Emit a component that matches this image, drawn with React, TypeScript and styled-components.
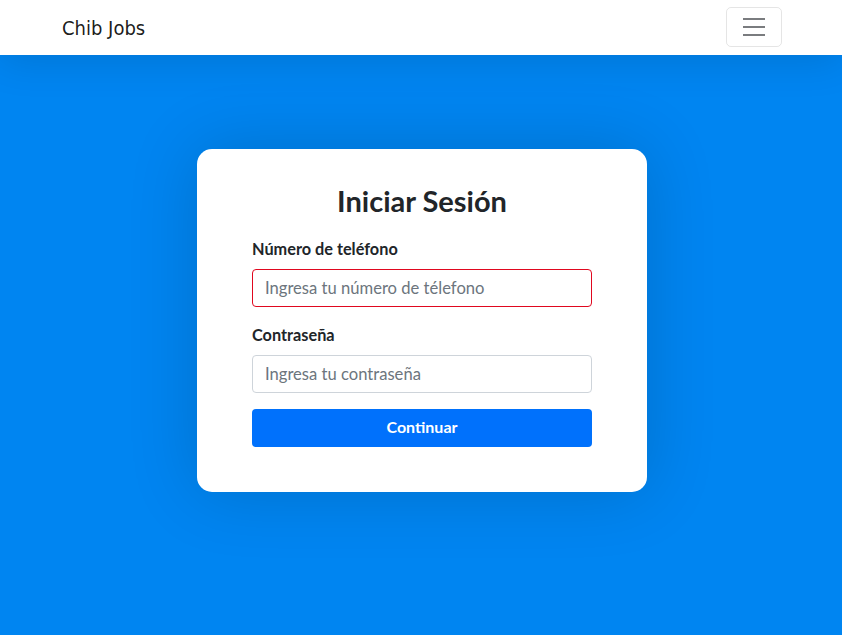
import React from "react";
import styled, { createGlobalStyle } from "styled-components";

const GlobalStyle = createGlobalStyle`
  html, body { margin: 0; padding: 0; }
  body {
    background: #0085f1;
    min-height: 100vh;
    font-family: "Lato", "Liberation Sans", sans-serif;
    color: #212529;
  }
  * { box-sizing: border-box; }
`;

const Page = styled.div`
  min-height: 100vh;
  display: flex;
  flex-direction: column;
  padding-left: 2px;
`;

const Navbar = styled.nav`
  background: #fff;
  height: 55px;
  margin-left: -2px;
  padding-left: 2px;
  display: flex;
  justify-content: center;
  position: relative;
  z-index: 1;
  box-shadow: 0 6px 40px rgba(0, 0, 0, 0.12);
`;

const NavInner = styled.div`
  width: 720px;
  display: flex;
  align-items: center;
  justify-content: space-between;
`;

const Brand = styled.a`
  font-family: "DejaVu Sans Condensed", "DejaVu Sans", sans-serif;
  font-stretch: condensed;
  font-size: 20px;
  color: rgba(0, 0, 0, 0.9);
  text-decoration: none;
`;

const Toggler = styled.button`
  width: 56px;
  height: 40px;
  border: 1px solid rgba(0, 0, 0, 0.1);
  border-radius: 5px;
  background: transparent;
  display: flex;
  align-items: center;
  justify-content: center;
  padding: 0;
  margin-top: -1px;
`;

const Main = styled.main`
  flex: 1;
  display: flex;
  justify-content: center;
  align-items: flex-start;
  padding-top: 94px;
`;

const Card = styled.div`
  width: 450px;
  background: #fff;
  border-radius: 15px;
  padding: 34px 55px 45px;
  box-shadow: 0 0 70px rgba(0, 0, 0, 0.16);
`;

const Title = styled.h2`
  margin: 0 0 19px;
  text-align: center;
  font-size: 29px;
  line-height: 35px;
  font-weight: 700;
  color: #212529;
`;

const Field = styled.div`
  margin-bottom: 16px;
`;

const Label = styled.label`
  display: block;
  font-size: 16.3px;
  line-height: 23px;
  font-weight: 700;
  margin-bottom: 9px;
  color: #212529;
`;

const Input = styled.input<{ $invalid?: boolean }>`
  display: block;
  width: 100%;
  height: 38px;
  padding: 6px 12px;
  font-family: inherit;
  font-size: 16.6px;
  color: #212529;
  border: 1px solid ${(p) => (p.$invalid ? "#e0081f" : "#ced4da")};
  border-radius: 4px;
  outline: none;
  &::placeholder {
    color: #6c757d;
  }
`;

const Button = styled.button`
  display: block;
  width: 100%;
  height: 38px;
  border: none;
  border-radius: 4px;
  padding: 0 0 3px;
  background: #0071fc;
  color: #fff;
  font-family: inherit;
  font-size: 16px;
  font-weight: 700;
`;

export default function App() {
  return (
    <>
      <GlobalStyle />
      <Page>
        <Navbar>
          <NavInner>
            <Brand href="#">Chib Jobs</Brand>
            <Toggler aria-label="menu">
              <svg width="30" height="30" viewBox="0 0 30 30">
                <path
                  d="M4 7h22M4 15h22M4 23h22"
                  stroke="rgba(33,37,41,0.6)"
                  strokeWidth="2"
                  strokeLinecap="butt"
                />
              </svg>
            </Toggler>
          </NavInner>
        </Navbar>
        <Main>
          <Card>
            <Title>Iniciar Sesión</Title>
            <Field>
              <Label>Número de teléfono</Label>
              <Input $invalid placeholder="Ingresa tu número de télefono" />
            </Field>
            <Field>
              <Label>Contraseña</Label>
              <Input type="password" placeholder="Ingresa tu contraseña" />
            </Field>
            <Button>Continuar</Button>
          </Card>
        </Main>
      </Page>
    </>
  );
}
